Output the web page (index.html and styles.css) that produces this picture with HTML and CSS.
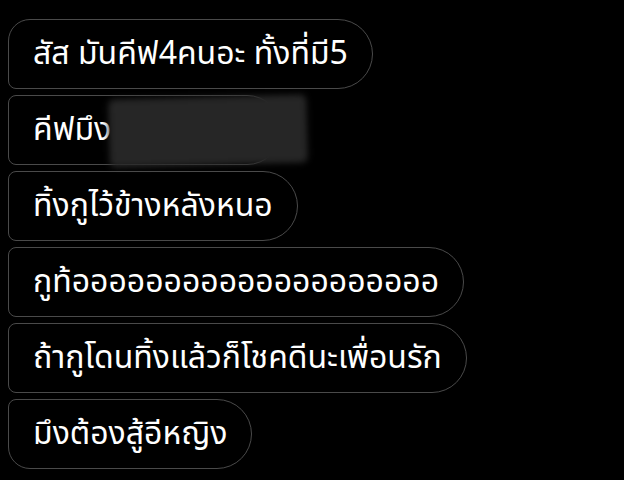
FILE: index.html
```html
<!DOCTYPE html>
<html lang="th">
<head>
<meta charset="utf-8">
<link rel="stylesheet" href="styles.css">
</head>
<body>
<div class="thread">
  <div class="bubble first">สัส มันคีฟ4คนอะ ทั้งที่มี5</div>
  <div class="bubble">คีฟมึง<span class="spacer"></span><span class="smudge"></span></div>
  <div class="bubble">ทิ้งกูไว้ข้างหลังหนอ</div>
  <div class="bubble">กูท้ออออออออออออออออออออ</div>
  <div class="bubble">ถ้ากูโดนทิ้งแล้วก็โชคดีนะเพื่อนรัก</div>
  <div class="bubble last">มึงต้องสู้อีหญิง</div>
</div>
</body>
</html>
```

FILE: styles.css
```css
html, body {
  margin: 0;
  padding: 0;
  background: #000;
}
body {
  width: 624px;
  height: 480px;
  overflow: hidden;
  font-family: "Noto Sans Thai", "Noto Sans", "DejaVu Sans", sans-serif;
  color: #fff;
}
.thread {
  display: flex;
  flex-direction: column;
  align-items: flex-start;
  gap: 6px;
  padding: 19px 0 0 8px;
}
.bubble {
  position: relative;
  box-sizing: border-box;
  height: 70px;
  display: flex;
  align-items: center;
  padding: 0 24px 0 24px;
  border: 1.5px solid #4a4a4a;
  border-radius: 8px 35px 35px 8px;
  font-size: 32px;
  line-height: 1;
  white-space: nowrap;
}
.bubble.first {
  border-top-left-radius: 22px;
}
.bubble.last {
  border-bottom-left-radius: 22px;
}
.spacer {
  display: inline-block;
  width: 146px;
  height: 1px;
}
.smudge {
  position: absolute;
  left: 100px;
  top: 1px;
  width: 198px;
  height: 68px;
  background: #262626;
  border-radius: 6px;
  filter: blur(3px);
  transform: rotate(-1.5deg);
}
```
